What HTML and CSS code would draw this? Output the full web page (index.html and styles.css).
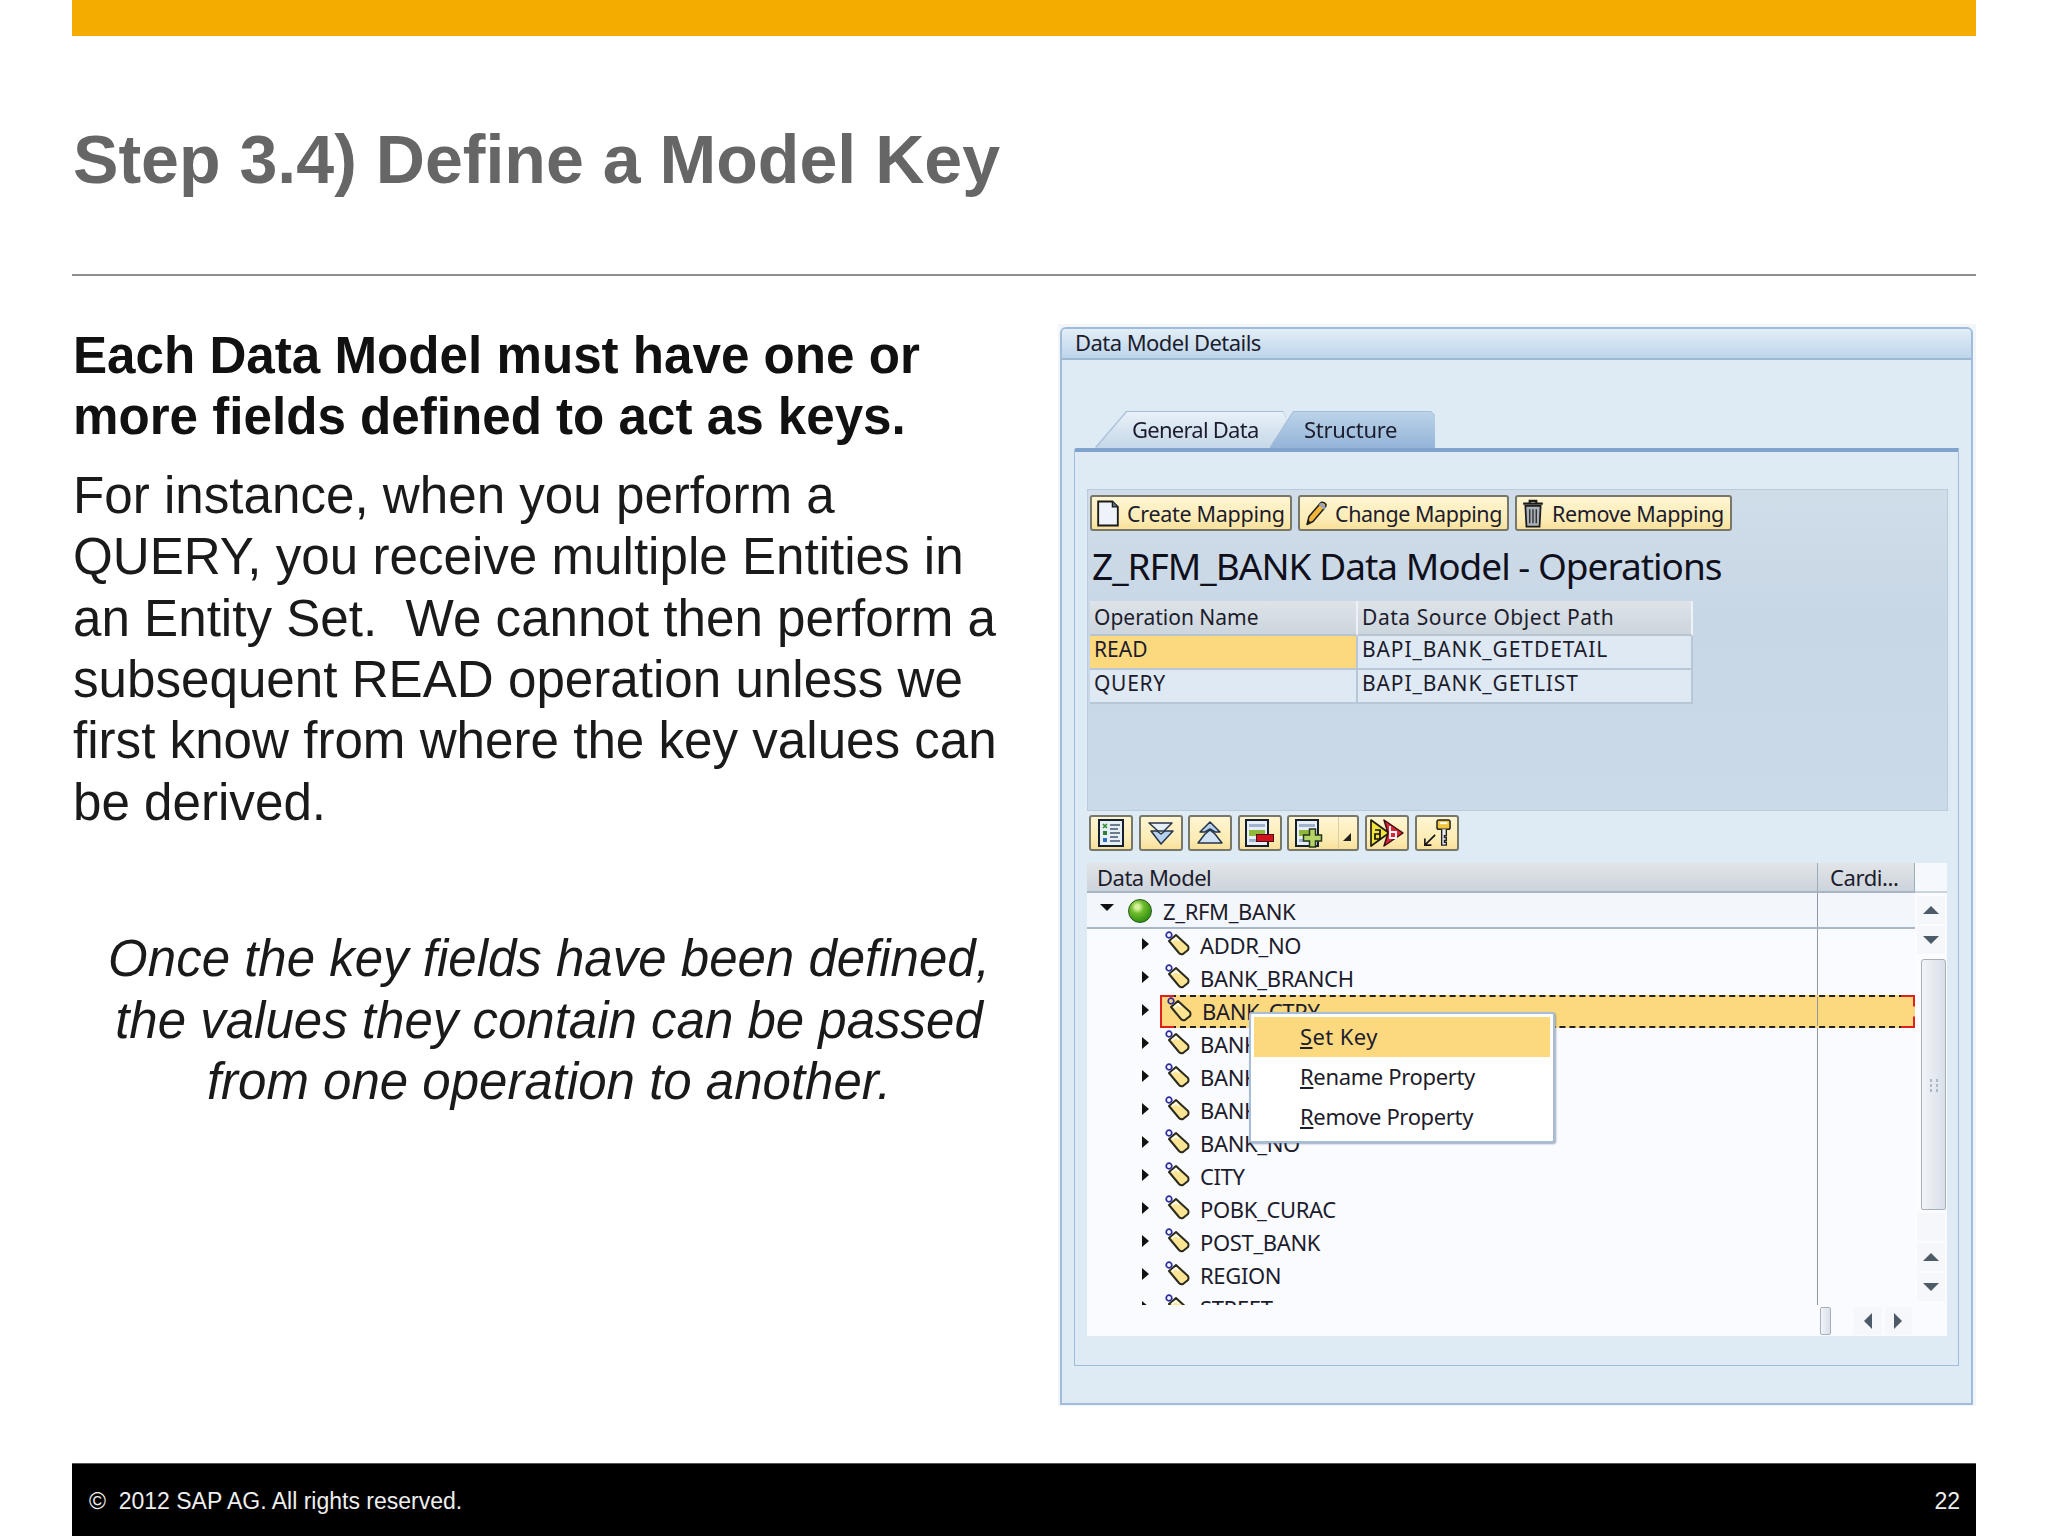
FILE: index.html
```html
<!DOCTYPE html>
<html lang="en">
<head>
<meta charset="utf-8">
<title>Step 3.4) Define a Model Key</title>
<link rel="stylesheet" href="styles.css">
</head>
<body>
<svg class="defs" width="0" height="0" aria-hidden="true">
  <symbol id="tag" viewBox="0 0 25 25">
    <path d="M4 10 L11 4 L23 15 Q24 17 23 19 L18 23 Q16 24 14 22 Z" fill="#fbe594" stroke="#2a2a1e" stroke-width="2" stroke-linejoin="round"/>
    <path d="M7 10 L11 7 L14 10" fill="none" stroke="#fff" stroke-width="1.6"/>
    <circle cx="4" cy="4" r="2.8" fill="none" stroke="#2c2c9e" stroke-width="1.7"/>
  </symbol>
  <symbol id="doc" viewBox="0 0 22 26">
    <path d="M2 2 H15 L20 7 V24 H2 Z" fill="#eef3fa" stroke="#1a1a1a" stroke-width="1.7"/>
    <path d="M15 2 V7 H20" fill="#5b6f8a" stroke="#1a1a1a" stroke-width="1.2"/>
  </symbol>
  <symbol id="pencil" viewBox="0 0 24 26">
    <path d="M3 24 L5 16 L17 2 Q20 1 22 4 Q22 6 21 7 L9 21 Z" fill="#f4b63a" stroke="#1c1c1c" stroke-width="1.5" stroke-linejoin="round"/>
    <path d="M16 3 L21 8" stroke="#8ea6c8" stroke-width="3"/>
    <path d="M3 24 L4 19 L7 22 Z" fill="#222"/>
  </symbol>
  <symbol id="trash" viewBox="0 0 22 26">
    <path d="M4 6 H18 L17 25 H5 Z" fill="#a9b0b8" stroke="#1c1c1c" stroke-width="1.6"/>
    <path d="M2 4 H20 M8 4 V1.5 H14 V4" fill="none" stroke="#1c1c1c" stroke-width="2"/>
    <path d="M8 9 V22 M11 9 V22 M14 9 V22" stroke="#333" stroke-width="1.3"/>
  </symbol>
  <symbol id="list" viewBox="0 0 26 28">
    <rect x="1" y="1" width="24" height="26" fill="#e8eef6" stroke="#15202e" stroke-width="2"/>
    <path d="M5 5 L9 9 M9 5 L5 9" stroke="#2c8f2c" stroke-width="1.6"/>
    <rect x="5" y="12" width="4" height="4" fill="#2e7d32"/>
    <rect x="5" y="19" width="4" height="4" fill="#2f6fc0"/>
    <path d="M12 6 H22 M12 10 H20 M12 14 H22 M12 18 H20 M12 22 H22" stroke="#44566c" stroke-width="1.5"/>
  </symbol>
  <symbol id="expand" viewBox="0 0 28 26">
    <path d="M2 3 H25 L17 11 H11 Z" fill="#e6eff8" stroke="#26344a" stroke-width="1.5" stroke-linejoin="round"/>
    <path d="M10 11 L14 14 L18 11 H26 L14 24 L4 11 Z" fill="#b6d2ee" stroke="#26344a" stroke-width="1.5" stroke-linejoin="round"/>
  </symbol>
  <symbol id="collapse" viewBox="0 0 28 26">
    <path d="M14 2 L24 12 H19 L14 9 L9 12 H4 Z" fill="#b6d2ee" stroke="#26344a" stroke-width="1.5" stroke-linejoin="round"/>
    <path d="M14 10 L19 14 L26 23 H2 L9 14 Z" fill="#cfe1f3" stroke="#26344a" stroke-width="1.5" stroke-linejoin="round"/>
  </symbol>
  <symbol id="node" viewBox="0 0 26 28">
    <rect x="1" y="1" width="22" height="26" fill="#e8eef6" stroke="#15202e" stroke-width="2"/>
    <rect x="4" y="5" width="16" height="3" fill="#9fb4cc"/>
    <rect x="4" y="11" width="16" height="6" fill="#8fb83c"/>
    <rect x="4" y="20" width="16" height="3" fill="#9fb4cc"/>
  </symbol>
  <symbol id="plusglyph" viewBox="0 0 20 20">
    <path d="M7 1 H13 V7 H19 V13 H13 V19 H7 V13 H1 V7 H7 Z" fill="#b4d468" stroke="#26361a" stroke-width="1.5"/>
  </symbol>
  <symbol id="ab" viewBox="0 0 36 30">
    <path d="M2 2 L20 15 L2 28 Z" fill="#f2e23c" stroke="#1c1c10" stroke-width="1.7" stroke-linejoin="round"/>
    <path d="M15 2 L34 15 L15 28 L19 15 Z" fill="#d92638" stroke="#3a0c10" stroke-width="1.5" stroke-linejoin="round"/>
    <path d="M6 12 H11 V21 H6 V16 H11" fill="none" stroke="#111" stroke-width="1.7"/>
    <path d="M21 8 V20 H27 V14 H21" fill="none" stroke="#fff" stroke-width="1.8"/>
  </symbol>
  <symbol id="keyarrow" viewBox="0 0 30 30">
    <path d="M13 17 L2 28 M2 21 V28 H9" fill="none" stroke="#111" stroke-width="1.7"/>
    <rect x="15" y="1" width="14" height="10" rx="2" fill="#f0c63c" stroke="#222" stroke-width="1.6"/>
    <rect x="18" y="3.5" width="8" height="2" fill="#fff"/>
    <path d="M20 11 V28 H25 V25 H23 V23 H25 V20 H23 V18 H25 V11" fill="#e8eef6" stroke="#222" stroke-width="1.5"/>
  </symbol>
</svg>

<div class="slide">
  <div class="topbar"></div>
  <header class="title-block"><h1 class="title">Step 3.4) Define a Model Key</h1></header>

  <main class="content">
    <section class="text-col">
      <p class="lead">Each Data Model must have one or<br>more fields defined to act as keys.</p>
      <p class="para">For instance, when you perform a<br>QUERY, you receive multiple Entities in<br>an Entity Set.&nbsp; We cannot then perform a<br>subsequent READ operation unless we<br>first know from where the key values can<br>be derived.</p>
      <p class="note">Once the key fields have been defined,<br>the values they contain can be passed<br>from one operation to another.</p>
    </section>

    <section class="sap">
      <div class="win">
        <div class="win-title">Data Model Details</div>
        <div class="tabs">
          <div class="tab tab-off">General Data</div>
          <div class="tab tab-on">Structure</div>
        </div>
        <div class="panel">
          <div class="zone">
            <div class="btnbar">
              <div class="btn btn-text btn-create"><svg class="i-doc"><use href="#doc"/></svg>Create Mapping</div>
              <div class="btn btn-text btn-change"><svg class="i-doc"><use href="#pencil"/></svg>Change Mapping</div>
              <div class="btn btn-text btn-remove"><svg class="i-doc"><use href="#trash"/></svg>Remove Mapping</div>
            </div>
            <div class="zone-title">Z_RFM_BANK Data Model - Operations</div>
            <div class="optable">
              <div class="op-h">Operation Name</div><div class="op-h op-wide">Data Source Object Path</div>
              <div class="op-c op-sel">READ</div><div class="op-c op-path">BAPI_BANK_GETDETAIL</div>
              <div class="op-c op-query">QUERY</div><div class="op-c op-path">BAPI_BANK_GETLIST</div>
            </div>
          </div>

          <div class="iconbar">
            <div class="btn btn-icon"><svg class="i-tool"><use href="#list"/></svg></div>
            <div class="btn btn-icon"><svg class="i-tool"><use href="#expand"/></svg></div>
            <div class="btn btn-icon"><svg class="i-tool"><use href="#collapse"/></svg></div>
            <div class="btn btn-icon"><svg class="i-tool i-node"><use href="#node"/></svg><span class="minus"></span></div>
            <div class="btn btn-split">
              <span class="split-main"><svg class="i-tool i-node"><use href="#node"/></svg><svg class="plus"><use href="#plusglyph"/></svg></span>
              <span class="split-drop"><span class="drop-tri"></span></span>
            </div>
            <div class="btn btn-icon"><svg class="i-ab"><use href="#ab"/></svg></div>
            <div class="btn btn-icon"><svg class="i-tool"><use href="#keyarrow"/></svg></div>
          </div>

          <div class="tree">
            <div class="tree-head">
              <div class="th-main">Data Model</div>
              <div class="th-card">Cardi...</div>
              <div class="th-corner"></div>
            </div>
            <div class="tree-mid">
              <div class="rows">
                <div class="row root"><div class="cell"><span class="tri-down"></span><span class="ball"></span><span>Z_RFM_BANK</span></div><div class="card"></div></div>
                <div class="row"><div class="cell"><span class="tri-right"></span><svg class="i-tag"><use href="#tag"/></svg><span>ADDR_NO</span></div><div class="card"></div></div>
                <div class="row"><div class="cell"><span class="tri-right"></span><svg class="i-tag"><use href="#tag"/></svg><span>BANK_BRANCH</span></div><div class="card"></div></div>
                <div class="row row-sel">
                  <span class="tri-right"></span>
                  <div class="sel-band"><div class="sel-cell"><svg class="i-tag"><use href="#tag"/></svg><span>BANK_CTRY</span></div><div class="card"></div></div>
                </div>
                <div class="row"><div class="cell"><span class="tri-right"></span><svg class="i-tag"><use href="#tag"/></svg><span>BANK_KEY</span></div><div class="card"></div></div>
                <div class="row"><div class="cell"><span class="tri-right"></span><svg class="i-tag"><use href="#tag"/></svg><span>BANK_NAME</span></div><div class="card"></div></div>
                <div class="row"><div class="cell"><span class="tri-right"></span><svg class="i-tag"><use href="#tag"/></svg><span>BANK_SWIFT</span></div><div class="card"></div></div>
                <div class="row"><div class="cell"><span class="tri-right"></span><svg class="i-tag"><use href="#tag"/></svg><span>BANK_NO</span></div><div class="card"></div></div>
                <div class="row"><div class="cell"><span class="tri-right"></span><svg class="i-tag"><use href="#tag"/></svg><span>CITY</span></div><div class="card"></div></div>
                <div class="row"><div class="cell"><span class="tri-right"></span><svg class="i-tag"><use href="#tag"/></svg><span>POBK_CURAC</span></div><div class="card"></div></div>
                <div class="row"><div class="cell"><span class="tri-right"></span><svg class="i-tag"><use href="#tag"/></svg><span>POST_BANK</span></div><div class="card"></div></div>
                <div class="row"><div class="cell"><span class="tri-right"></span><svg class="i-tag"><use href="#tag"/></svg><span>REGION</span></div><div class="card"></div></div>
                <div class="row"><div class="cell"><span class="tri-right"></span><svg class="i-tag"><use href="#tag"/></svg><span>STREET</span></div><div class="card"></div></div>
              </div>
              <div class="vscroll">
                <div class="sb-btn"><span class="ar-up"></span></div>
                <div class="sb-btn"><span class="ar-down"></span></div>
                <div class="v-thumb"><span class="grip"></span></div>
                <div class="sb-btn sb-blank"></div>
                <div class="sb-btn"><span class="ar-up"></span></div>
                <div class="sb-btn"><span class="ar-down"></span></div>
              </div>
            </div>
            <div class="hscroll">
              <div class="h-thumb"></div>
              <div class="h-blank"></div>
              <div class="hb"><span class="ar-left"></span></div>
              <div class="hb"><span class="ar-right"></span></div>
            </div>
            <div class="menu">
              <div class="menu-item menu-on"><span class="menu-set"><u>S</u>et Key</span></div>
              <div class="menu-item"><span><u>R</u>ename Property</span></div>
              <div class="menu-item"><span><u>R</u>emove Property</span></div>
            </div>
          </div>
        </div>
      </div>
    </section>
  </main>

  <footer class="footer">
    <span class="copy">©&nbsp; 2012 SAP AG. All rights reserved.</span>
    <span class="page">22</span>
  </footer>
</div>
</body>
</html>
```

FILE: styles.css
```css
* { box-sizing: border-box; }
html, body { margin: 0; padding: 0; background: #fff; }
.defs { position: absolute; }
.slide {
  width: 2048px; height: 1536px; padding: 0 72px;
  display: flex; flex-direction: column;
  font-family: "Liberation Sans", Arial, sans-serif;
}
.topbar { height: 36px; background: #f2ad00; flex: none; }
.title-block {
  height: 240px; flex: none; border-bottom: 2px solid #8f8f8f;
  display: flex; align-items: center; padding: 8px 0 0 1px;
}
.title { margin: 0; font-size: 68.1px; font-weight: 700; color: #666; line-height: 1; }
.content { display: flex; flex: 1; padding-top: 48px; min-height: 0; }
.text-col { flex: none; width: 986px; padding: 1px 0 0 1px; font-size: 51.15px; line-height: 61.4px; color: #1a1a1a; }
.lead { margin: 0; font-weight: 700; color: #111; }
.para { margin: 17px 0 0; }
.note { margin: 95px 0 0; width: 952px; font-size: 51px; text-align: center; font-style: italic; }
.footer {
  height: 73px; flex: none; background: #000; color: #eee;
  border-top: 1px solid #555;
  display: flex; align-items: center; justify-content: space-between;
  padding: 2px 16px 0 17px; font-size: 23px;
}

/* SAP window */
.sap {
  flex: none; width: 918px; height: 1082px; padding: 3px 3px 1px 2px;
  background: #f3f6f9;
  font-family: "Noto Sans", Tahoma, sans-serif; color: #1c1c2c;
}
.win {
  height: 1078px; border: 2px solid #a0bcdc; border-radius: 6px 6px 0 0;
  background: #deeaf4; display: flex; flex-direction: column;
}
.win-title {
  height: 31px; flex: none; padding: 0 13px; font-size: 22px; line-height: 27px;
  background: linear-gradient(#e2eef7, #bdd5ea); border-bottom: 2px solid #9db8d2;
  border-radius: 4px 4px 0 0; letter-spacing: -0.55px;
}
.tabs {
  display: flex; height: 36px; flex: none; margin-top: 52px; padding-left: 34px;
  filter: drop-shadow(0 -1px 0 #a5bcd5) drop-shadow(-1px 0 0 #b3c7dc);
}
.tab { height: 36px; font-size: 22px; line-height: 34px; white-space: nowrap; }
.tab-off {
  width: 190px; padding-left: 36px; letter-spacing: -0.75px;
  clip-path: polygon(31px 0, 187px 0, 190px 6px, 172px 100%, 0 100%);
  background: linear-gradient(#e9f1f8, #c5d7e8);
}
.tab-on {
  width: 165px; margin-left: -16px; padding-left: 34px; letter-spacing: -0.3px;
  clip-path: polygon(24px 0, 161px 0, 165px 4px, 100% 100%, 0 100%);
  background: linear-gradient(#bcd3e9, #94b4d8);
}
.panel {
  margin: 0 12px 0 12px; height: 918px; flex: none;
  border: 1px solid #a0bcdc; border-top: 4px solid #7fa3cc;
  padding: 37px 10px 0 12px; border-radius: 3px 0 0 0;
}
.zone {
  height: 322px; background: linear-gradient(#d0dde9, #c8d7e6 40%, #cbdae8);
  border: 1px solid #b9cbdc; padding: 5px 2px 0;
}
.btnbar { display: flex; gap: 6px; height: 36px; }
.btn {
  display: flex; align-items: center;
  background: linear-gradient(#fff5d2, #fcebb4 70%, #f8e09a);
  border: 2px solid #77776a; border-radius: 3px;
}
.btn-text { height: 36px; padding: 0 0 0 4px; font-size: 21.5px; gap: 7px; white-space: nowrap; }
.btn-create { width: 202px; letter-spacing: -0.3px; }
.btn-change { width: 211px; letter-spacing: -0.45px; }
.btn-remove { width: 217px; letter-spacing: -0.35px; }
.i-doc { width: 24px; height: 29px; flex: none; }
.zone-title {
  height: 70px; line-height: 70px; padding-left: 2px; font-size: 37px;
  color: #10101c; letter-spacing: -1px; white-space: nowrap;
}
.optable {
  display: grid; grid-template-columns: 268px 335px; grid-template-rows: 35px 34px 34px;
  width: 603px;
}
.op-h {
  font-size: 21px; line-height: 32px; padding-left: 4px; white-space: nowrap;
  background: linear-gradient(#dde3e9, #cdd5dd); border-right: 2px solid #eef2f6; border-bottom: 2px solid #b8c4d0;
}
.op-wide { letter-spacing: 0.55px; }
.op-c {
  font-size: 21px; line-height: 27px; padding-left: 4px; white-space: nowrap;
  background: #dfe9f3; border-right: 2px solid #b7c7d7; border-bottom: 2px solid #b7c7d7;
}
.op-path { letter-spacing: 0.9px; }
.op-query { letter-spacing: 0.7px; }
.op-sel { background: #fcd97f; }

.iconbar { display: flex; gap: 5.6px; height: 36px; margin-top: 4px; padding-left: 2px; }
.btn-icon { width: 44px; height: 36px; justify-content: center; position: relative; }
.btn-split { width: 72px; height: 36px; position: relative; }
.split-main { width: 50px; height: 100%; display: flex; align-items: center; justify-content: flex-start; padding-left: 5px; border-right: 1px solid #d8cfa8; position: relative; }
.split-drop { flex: 1; height: 100%; position: relative; }
.drop-tri {
  position: absolute; right: 6px; bottom: 8px; width: 0; height: 0;
  border-left: 8px solid transparent; border-bottom: 8px solid #222;
}
.i-tool { width: 28px; height: 28px; flex: none; }
.i-node { margin-right: 4px; }
.i-ab { width: 38px; height: 30px; flex: none; }
.minus { position: absolute; left: 16px; top: 17px; width: 18px; height: 8px; background: #d4121e; border: 1px solid #4a1015; }
.plus { position: absolute; left: 13px; top: 11px; width: 21px; height: 20px; }

.tree {
  position: relative; width: 860px; height: 473px; margin-top: 12px;
  font-size: 22px; background: #f9fbff; letter-spacing: -0.35px;
}
.tree-head { display: flex; height: 30px; }
.th-main {
  width: 730px; padding-left: 10px; line-height: 29px; font-size: 22px; letter-spacing: -0.5px;
  background: linear-gradient(#e1e5e9, #ccd3da); border-bottom: 2px solid #a8b5c2;
}
.th-card {
  width: 98px; padding-left: 12px; line-height: 29px; font-size: 22px; letter-spacing: -0.4px;
  background: linear-gradient(#e1e5e9, #ccd3da); border-bottom: 2px solid #a8b5c2;
  border-left: 1px solid #9fabb6; border-right: 1px solid #9fabb6;
}
.th-corner { flex: 1; background: #f5f8fc; border-bottom: 2px solid #c9d3dd; }
.tree-mid { display: flex; height: 412px; }
.rows { width: 828px; height: 412px; overflow: hidden; }
.row { display: flex; height: 33px; }
.root { height: 36px; background: #f3f6fb; border-bottom: 2px solid #a9b8c8; }
.cell { width: 730px; display: flex; align-items: center; padding-left: 55px; white-space: nowrap; line-height: 33px; }
.card { width: 98px; border-left: 1px solid #8f98a2; flex: none; }
.root .cell { padding: 1px 0 0 13px; line-height: 34px; }
.tri-down {
  width: 0; height: 0; margin-right: 14px; margin-top: -6px; flex: none;
  border-left: 7px solid transparent; border-right: 7px solid transparent; border-top: 7px solid #111;
}
.ball {
  width: 24px; height: 24px; border-radius: 50%; margin-right: 11px; flex: none;
  background: radial-gradient(circle at 38% 32%, #d8f29c 0 10%, #6fbc2c 32%, #349414 72%, #2a7a10);
  border: 1px solid #28561a;
}
.tri-right {
  width: 0; height: 0; margin-right: 16px; margin-top: -3px; flex: none;
  border-top: 6px solid transparent; border-bottom: 6px solid transparent; border-left: 7px solid #111;
}
.i-tag { width: 25px; height: 25px; margin-right: 10px; margin-top: -4px; flex: none; }
.row-sel { align-items: center; padding-left: 55px; }
.sel-band {
  width: 755px; height: 33px; flex: none; margin-left: -5px; display: flex; position: relative;
  background: #fcd97f; border-top: 2px dashed #222; border-bottom: 2px dashed #222;
}
.sel-band::before, .sel-band::after { content: ""; position: absolute; top: -2px; bottom: -2px; width: 12px; }
.sel-band::before { left: 0; border: 2px solid #e0201c; border-right: 0; }
.sel-band::after { right: 0; border: 2px solid #e0201c; border-left: 0; clip-path: polygon(0 0, 100% 0, 100% 35%, 80% 35%, 80% 65%, 100% 65%, 100% 100%, 0 100%); }
.sel-cell { width: 657px; flex: none; display: flex; align-items: center; padding-left: 7px; white-space: nowrap; line-height: 29px; }

.vscroll { width: 32px; display: flex; flex-direction: column; align-items: center; padding-top: 3px; background: #fafcff; }
.sb-btn { width: 28px; height: 28px; flex: none; margin-bottom: 2px; display: flex; align-items: center; justify-content: center; background: #f5f7fb; }
.sb-blank { margin-top: 3px; }
.v-thumb {
  width: 25px; height: 251px; flex: none; margin-top: 3px; margin-left: 4px; position: relative;
  background: linear-gradient(90deg, #f1f4f8, #d9e0e9); border: 1px solid #a8afb8; border-radius: 3px 3px 2px 2px;
}
.grip {
  position: absolute; left: 6px; top: 118px; width: 11px; height: 14px;
  background: radial-gradient(circle, #aeb8c4 1.2px, transparent 1.4px) 0 0 / 6px 5px;
}
.ar-up, .ar-down, .ar-left, .ar-right { width: 0; height: 0; }
.ar-up { border-left: 8px solid transparent; border-right: 8px solid transparent; border-bottom: 8px solid #4d5b68; }
.ar-down { border-left: 8px solid transparent; border-right: 8px solid transparent; border-top: 8px solid #4d5b68; }
.ar-left { border-top: 8px solid transparent; border-bottom: 8px solid transparent; border-right: 8px solid #4d5b68; }
.ar-right { border-top: 8px solid transparent; border-bottom: 8px solid transparent; border-left: 8px solid #4d5b68; }
.hscroll { height: 31px; display: flex; align-items: center; padding: 0 32px 0 733px; background: #fafbfe; }
.h-thumb { width: 11px; height: 28px; flex: none; background: linear-gradient(90deg, #f1f4f8, #d9e0e9); border: 1px solid #a8afb8; border-radius: 2px; }
.h-blank { width: 23px; flex: none; }
.hb { width: 28px; height: 28px; margin-right: 3px; display: flex; align-items: center; justify-content: center; background: #f5f7fb; }

.menu {
  position: absolute; left: 162px; top: 149px; width: 306px; height: 131px;
  background: #fff; border: 2px solid #a7bdd6; border-radius: 3px;
  box-shadow: 1px 1px 2px rgba(90, 110, 140, .6);
  padding: 3px 3px 0;
}
.menu-item { height: 40px; padding-left: 46px; font-size: 22px; line-height: 39px; }
.menu-on { background: #fcd97f; }
.menu-set { letter-spacing: 0.4px; }
```
